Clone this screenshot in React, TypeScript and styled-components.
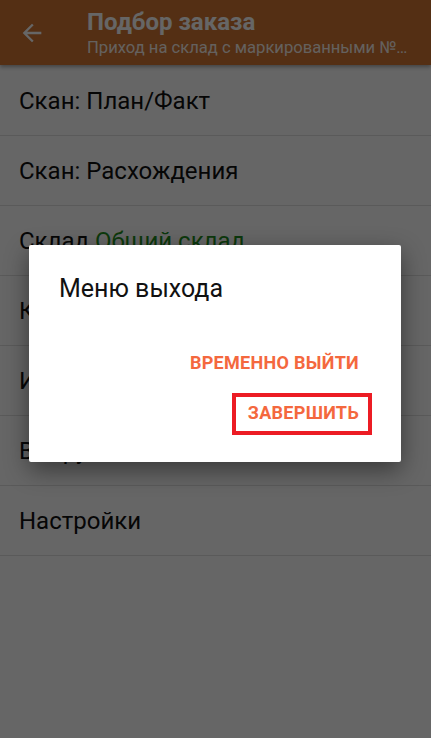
import React from 'react';
import styled, { createGlobalStyle } from 'styled-components';

const GlobalStyle = createGlobalStyle`
  html, body {
    margin: 0;
    padding: 0;
    background: #ffffff;
    font-family: Roboto, "Liberation Sans", Arial, sans-serif;
  }
`;

const Screen = styled.div`
  position: relative;
  width: 431px;
  height: 738px;
  overflow: hidden;
  background: #ffffff;
`;

const AppBar = styled.header`
  position: relative;
  z-index: 1;
  height: 65px;
  display: flex;
  align-items: center;
  background: #d17634;
  box-shadow: 0 2px 4px rgba(0, 0, 0, 0.35);
  color: #ffffff;
`;

const BackButton = styled.div`
  width: 28px;
  height: 28px;
  margin-left: 18px;
  margin-right: 41px;
  display: flex;
`;

const Titles = styled.div`
  flex: 1;
  align-self: stretch;
  min-width: 0;
  box-sizing: border-box;
  padding: 8px 20px 0 0;
  display: flex;
  flex-direction: column;
`;

const Title = styled.div`
  font-size: 24px;
  font-weight: 700;
  line-height: 28px;
`;

const Subtitle = styled.div`
  font-size: 16.6px;
  line-height: 20px;
  margin-top: 2px;
  white-space: nowrap;
  overflow: hidden;
  color: rgba(255, 255, 255, 0.92);
`;

const Menu = styled.div`
  display: flex;
  flex-direction: column;
  margin-top: 1px;
`;

const Row = styled.div`
  height: 69px;
  display: flex;
  align-items: center;
  padding-left: 19px;
  border-bottom: 1px solid #e2e2e2;
  font-size: 24px;
  color: #111111;
`;

const Accent = styled.span`
  color: #1f8f22;
`;

const Scrim = styled.div`
  position: absolute;
  inset: 0;
  z-index: 2;
  background: rgba(0, 0, 0, 0.6);
  padding-top: 245px;
  padding-left: 29px;
`;

const Dialog = styled.div`
  width: 372px;
  box-sizing: border-box;
  background: #ffffff;
  border-radius: 2px;
  box-shadow: 0 8px 24px rgba(0, 0, 0, 0.45);
  padding: 30px 42px 27px 30px;
  display: flex;
  flex-direction: column;
`;

const DialogTitle = styled.div`
  font-size: 25px;
  line-height: 28px;
  color: #111111;
`;

const Actions = styled.div`
  display: flex;
  flex-direction: column;
  align-items: flex-end;
  margin-top: 48px;
`;

const ActionButton = styled.div`
  font-size: 18px;
  font-weight: 700;
  line-height: 24px;
  letter-spacing: 0.3px;
  color: #f4683e;
`;

const Highlight = styled.div`
  margin-top: 18px;
  margin-right: -13px;
  border: 4px solid #ec1c24;
  padding: 4px 9px 6px 12px;
`;

function BackArrow() {
  return (
    <svg width="28" height="28" viewBox="0 0 24 24" fill="#ffffff">
      <path d="M20 11H7.83l5.59-5.59L12 4l-8 8 8 8 1.41-1.41L7.83 13H20v-2z" />
    </svg>
  );
}

const items: React.ReactNode[] = [
  'Скан: План/Факт',
  'Скан: Расхождения',
  <span>
    Склад <Accent>Общий склад</Accent>
  </span>,
  'Коробки',
  'Информация',
  'Выгрузить',
  'Настройки',
];

export default function App() {
  return (
    <Screen>
      <GlobalStyle />
      <AppBar>
        <BackButton>
          <BackArrow />
        </BackButton>
        <Titles>
          <Title>Подбор заказа</Title>
          <Subtitle>Приход на склад с маркированными №…</Subtitle>
        </Titles>
      </AppBar>
      <Menu>
        {items.map((item, i) => (
          <Row key={i}>{item}</Row>
        ))}
      </Menu>
      <Scrim>
        <Dialog>
          <DialogTitle>Меню выхода</DialogTitle>
          <Actions>
            <ActionButton>ВРЕМЕННО ВЫЙТИ</ActionButton>
            <Highlight>
              <ActionButton>ЗАВЕРШИТЬ</ActionButton>
            </Highlight>
          </Actions>
        </Dialog>
      </Scrim>
    </Screen>
  );
}
